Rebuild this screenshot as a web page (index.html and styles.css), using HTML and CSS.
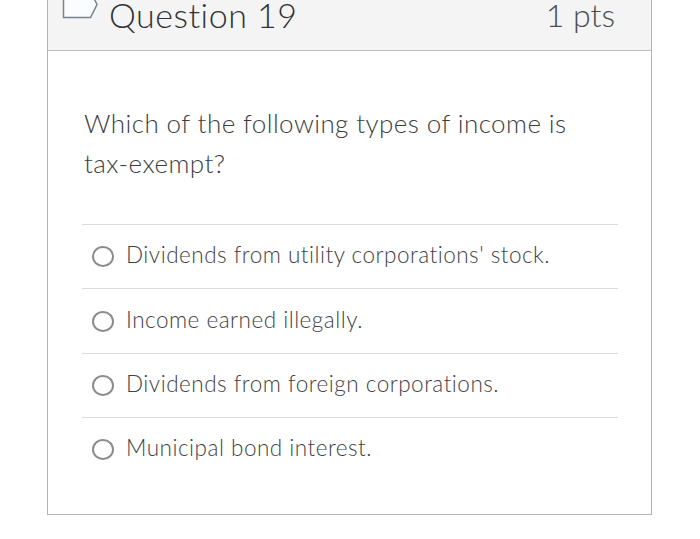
FILE: index.html
```html
<!DOCTYPE html>
<html>
<head>
<meta charset="utf-8">
<link rel="stylesheet" href="styles.css">
</head>
<body>
<div class="card">
  <div class="header">
    <svg class="tag" width="37" height="29" viewBox="0 0 37 29">
      <path d="M1.5 1.5 H28.5 L35 14.5 L28.5 27.5 H1.5 Z" fill="#fbfcfd" stroke="#75838f" stroke-width="1.5"/>
    </svg>
    <div class="title">Question 19</div>
    <div class="pts">1 pts</div>
  </div>
  <div class="body">
    <div class="question">Which of the following types of income is tax-exempt?</div>
    <div class="options">
      <div class="option"><span class="radio"></span><span class="label">Dividends from utility corporations' stock.</span></div>
      <div class="option"><span class="radio"></span><span class="label">Income earned illegally.</span></div>
      <div class="option"><span class="radio"></span><span class="label">Dividends from foreign corporations.</span></div>
      <div class="option last"><span class="radio"></span><span class="label">Municipal bond interest.</span></div>
    </div>
  </div>
</div>
</body>
</html>
```

FILE: styles.css
```css
html, body {
  margin: 0;
  padding: 0;
  background: #ffffff;
}
body {
  font-family: Lato, "Open Sans", sans-serif;
  font-weight: 300;
  color: #3b3f42;
}
.card {
  margin-top: -22px;
  margin-left: 47px;
  width: 603px;
  border: 1px solid #b4b4b4;
  border-top: none;
}
.header {
  height: 72px;
  background: #f4f4f4;
  border-bottom: 1px solid #bdbdbd;
  display: flex;
  align-items: flex-start;
  padding: 0 36px 0 14px;
  box-sizing: content-box;
}
.tag {
  margin-top: 12px;
  flex: none;
}
.title {
  margin-top: 22px;
  margin-left: 10px;
  font-size: 34px;
  line-height: 30px;
  letter-spacing: 0.5px;
  color: #2f3336;
}
.pts {
  margin-top: 22px;
  margin-left: auto;
  font-size: 32px;
  line-height: 30px;
  color: #4a4d50;
}
.body {
  padding: 52px 33px 32px 34px;
}
.question {
  font-size: 26px;
  line-height: 40px;
  letter-spacing: 0.42px;
  color: #3b3e41;
  padding-left: 2px;
  padding-right: 20px;
}
.options {
  margin-top: 41px;
}
.option {
  height: 63.4px;
  border-top: 1px solid #dcdcdc;
  display: flex;
  align-items: center;
  padding-left: 10px;
}
.radio {
  width: 18px;
  height: 17px;
  border: 2px solid #8c8c8c;
  border-radius: 50%;
  flex: none;
}
.label {
  margin-left: 12px;
  margin-bottom: 4px;
  font-size: 22.5px;
  letter-spacing: 0.5px;
  color: #3f4245;
}
```
